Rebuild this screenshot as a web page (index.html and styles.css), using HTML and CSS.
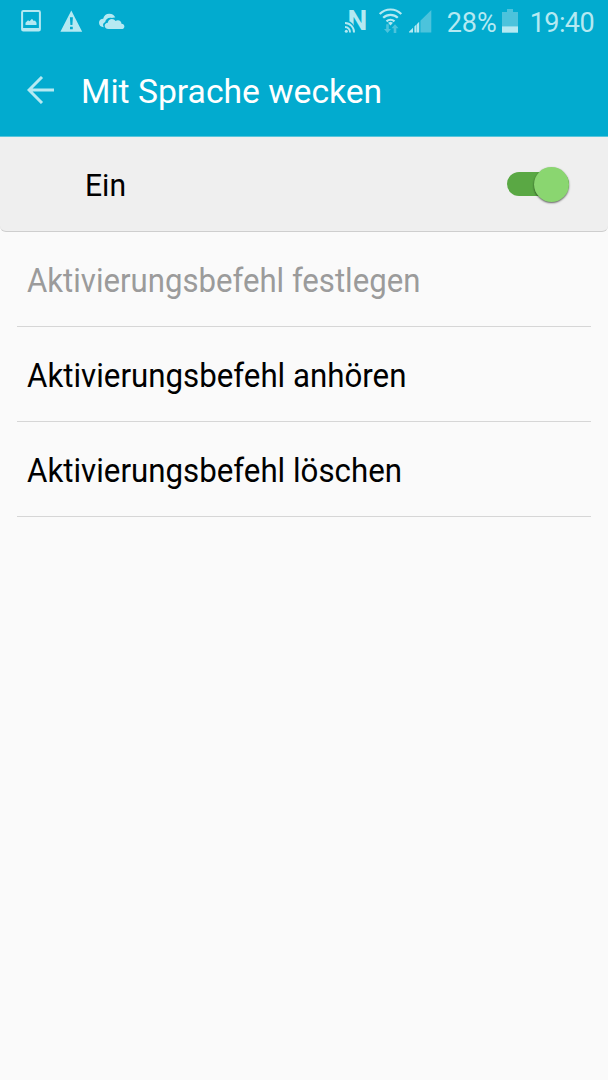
FILE: index.html
```html
<!DOCTYPE html>
<html lang="de">
  <head>
    <meta charset="UTF-8" />
    <meta name="viewport" content="width=device-width, initial-scale=1.0" />
    <title>Mit Sprache wecken</title>
    <link rel="stylesheet" href="styles.css">
  </head>
  <body>
    <header>
      <div class="status">
        <svg class="notifications" width="110" height="44" viewBox="0 0 110 44">
          <rect x="2.1" y="11.1" width="17.8" height="19.3" rx="1.2" fill="none" stroke="#b5e9f2" stroke-width="2" />
          <path d="M2 28h18v3H2z" />
          <path d="M5.5 25v-2.2l2.5-2.6 1.5 1 2.5-2.4 1.8 2.2 1.2-.6 1.5 2.4V25z" />
          <path fill-rule="evenodd" d="M51.3 10.5 62.2 31.7H40.4zM49.9 17.3l.5 7.7h2l.5-7.7zM50 26.8v2.4h2.8v-2.4z" />
          <path d="M84 27.2c-3.2 0-5-1.9-5-4.4 0-2.6 1.9-4 4.2-4 .6-3.3 3-5.1 6-5.1 3.4 0 5 1.4 6.1 3.8-1.4-.2-2.5 0-3.4.5-3.4-.9-6.1 1-6.8 4.2-2 .6-2.7 2.8-1.1 5z" />
          <path d="M88.5 29c-2.6 0-3.8-1.5-3.8-3.2 0-1.8 1.3-3 3.1-3.1.2-2.3 2-3.8 4.1-3.8 1.7 0 2.8.7 3.6 2 3.2-1.6 5.9.2 6 2.9 1.8.2 2.9 1.2 2.9 2.6 0 1.6-1.3 2.6-3 2.6z" />
        </svg>
        <div class="status-right">
          <svg class="signals" width="92" height="44" viewBox="0 0 92 44">
            <text class="nfc" x="7.6" y="30">N</text>
            <path class="cover" d="M5 21.5h5q5 3 6 11.5H5z" />
            <circle cx="6.3" cy="31.2" r="1.5" />
            <path class="wave thin" d="M5 27a5 5 0 0 1 5 5.5M5 23a9 9 0 0 1 9 9.5" />
            <path class="wifi" d="M39.7 14.1a15 15 0 0 1 21.6 0M43.2 17.8a10.5 10.5 0 0 1 14.6 0M46.5 21.4a6 6 0 0 1 8 0" />
            <path d="m48 22.8 2.5-1 2.5 1-2.5 2.7z" />
            <path class="dim" d="M46.2 24.3h2.6V29h2.2L47.5 33 44 29h2.2zM53.7 33h2.6v-4.7h2.2L55 24.3l-3.5 4h2.2z" />
            <path d="M69 32.5v-.7l4-4v4.7zM74.4 32.5v-6l2.2-2.2v8.2z" />
            <path d="M77 32.5v-8.6l2.2-2.2v10.8z" />
            <path class="dim" d="M80.4 32.5V20.8L91.3 10v22.5z" />
          </svg>
          <span class="percent">28%</span>
          <svg class="battery" width="16" height="44" viewBox="0 0 16 44">
            <path class="dim" d="M0 12h5V9h6v3h5v14.5H0z" />
            <path d="M0 26.3h16v6.4H0z" />
          </svg>
          <span class="clock">19:40</span>
        </div>
      </div>
      <div class="title-bar">
        <svg class="back" width="28" height="28" viewBox="0 0 28 28">
          <path d="M15 1 2 14l13 13M2 14h25" />
        </svg>
        <h1>Mit Sprache wecken</h1>
      </div>
    </header>
    <div class="switch-row">
      <span>Ein</span>
      <div class="switch"><div class="thumb"></div></div>
    </div>
    <ul>
      <li class="disabled"><span>Aktivierungsbefehl festlegen</span></li>
      <li><span>Aktivierungsbefehl anhören</span></li>
      <li><span>Aktivierungsbefehl löschen</span></li>
    </ul>
  </body>
</html>
```
FILE: styles.css
```css
body {
    font-family: Roboto, sans-serif;
    background-color: #fafafa;
    color: #000;
    margin: 0;
}
header {
    background-color: #02abcf;
    height: 136px;
    border-bottom: 1px solid #58c5db;
}
.status {
    display: flex;
    justify-content: space-between;
    height: 44px;
    padding: 0 14px 0 20px;
    color: #b5e9f2;
    fill: #b5e9f2;
    font-size: 27px;
    line-height: 46px;
}
.status-right {
    display: flex;
}
.percent {
    margin-left: 15px;
}
.battery {
    margin-left: 5px;
}
.clock {
    margin-left: 12px;
    letter-spacing: -0.6px;
}
.nfc {
    font-weight: bold;
    font-size: 28px;
}
.cover {
    fill: #02abcf;
}
.dim {
    fill: #4cc3dc;
}
.wave, .wifi {
    fill: none;
    stroke: #b5e9f2;
    stroke-width: 2.2;
}
.thin {
    stroke-width: 1.9;
}
.title-bar {
    display: flex;
    align-items: center;
    height: 92px;
    padding-left: 27px;
}
.back {
    fill: none;
    stroke: #b5e9f2;
    stroke-width: 3;
}
h1 {
    margin: 1px 0 0 26px;
    color: #fff;
    font-size: 34px;
    font-weight: normal;
    transform: scaleX(0.99);
    transform-origin: left;
}
.switch-row {
    display: flex;
    justify-content: space-between;
    align-items: center;
    box-sizing: border-box;
    height: 95px;
    padding: 0 39px 0 84.5px;
    background-color: #efefef;
    border-bottom: 1px solid #cecece;
    border-radius: 0 0 6px 6px;
    font-size: 31px;
}
.switch-row span {
    padding-top: 2px;
    transform: scaleX(0.97);
    transform-origin: left;
}
.switch {
    display: flex;
    align-items: center;
    justify-content: flex-end;
    width: 62px;
    height: 24px;
    border-radius: 12px;
    background-color: #5aa844;
}
.thumb {
    width: 35px;
    height: 35px;
    border-radius: 50%;
    background-color: #8ad670;
    box-shadow: 0 1px 2px rgba(0,0,0,0.6);
}
ul {
    list-style: none;
    margin: 0 17px;
    padding: 0;
}
li {
    display: flex;
    align-items: center;
    box-sizing: border-box;
    height: 95.1px;
    padding: 3px 0 0 10px;
    border-bottom: 1px solid #d6d6d6;
    font-size: 32.5px;
}
li span {
    transform: scaleX(0.962);
    transform-origin: left;
}
.disabled {
    color: #9b9b9b;
}
.disabled span {
    transform: scaleX(0.958);
}
```
